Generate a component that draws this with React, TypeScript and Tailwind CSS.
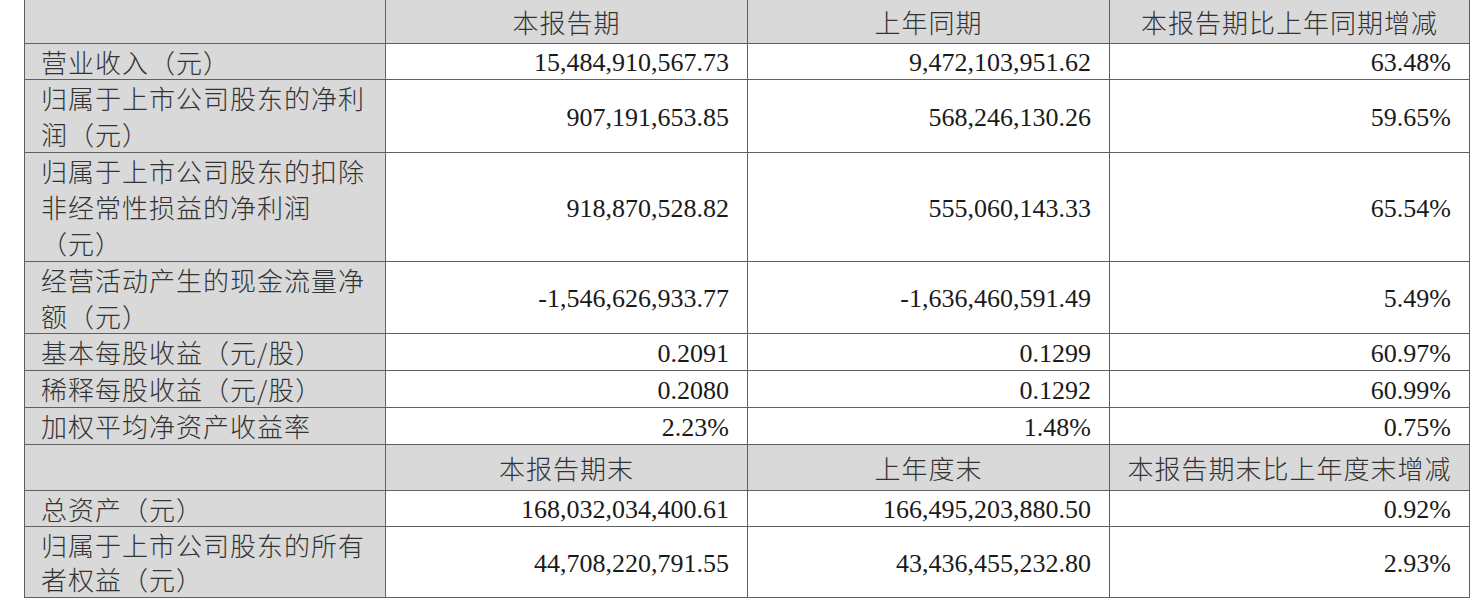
import React from "react";

type Row = {
  label: React.ReactNode;
  a: string;
  b: string;
  c: string;
  h: string;
  lh?: string;
};

const cn = "[font-family:'Noto_Sans_CJK_SC',sans-serif]";

const rows1: Row[] = [
  { label: <>营业收入（元）</>, a: "15,484,910,567.73", b: "9,472,103,951.62", c: "63.48%", h: "h-[36px]" },
  { label: <>归属于上市公司股东的净利<br />润（元）</>, a: "907,191,653.85", b: "568,246,130.26", c: "59.65%", h: "h-[73px]" },
  { label: <>归属于上市公司股东的扣除<br />非经常性损益的净利润<br />（元）</>, a: "918,870,528.82", b: "555,060,143.33", c: "65.54%", h: "h-[109px]" },
  { label: <>经营活动产生的现金流量净<br />额（元）</>, a: "-1,546,626,933.77", b: "-1,636,460,591.49", c: "5.49%", h: "h-[72px]" },
  { label: <>基本每股收益（元/股）</>, a: "0.2091", b: "0.1299", c: "60.97%", h: "h-[37px]" },
  { label: <>稀释每股收益（元/股）</>, a: "0.2080", b: "0.1292", c: "60.99%", h: "h-[37px]" },
  { label: <>加权平均净资产收益率</>, a: "2.23%", b: "1.48%", c: "0.75%", h: "h-[37px]" },
];

const rows2: Row[] = [
  { label: <>总资产（元）</>, a: "168,032,034,400.61", b: "166,495,203,880.50", c: "0.92%", h: "h-[36px]" },
  { label: <>归属于上市公司股东的所有<br />者权益（元）</>, a: "44,708,220,791.55", b: "43,436,455,232.80", c: "2.93%", h: "h-[71px]", lh: "leading-[34px]" },
];

const line = "border-[#5f5f5f]";

function Header({ t, h }: { t: string[]; h: string }) {
  return (
    <div className={`grid grid-cols-[361px_362px_362px_1fr] grid-rows-[minmax(0,1fr)] border-b ${line} bg-[#d9d9d9] ${h}`}>
      <div className={`border-r ${line}`} />
      {t.map((x, i) => (
        <div
          key={i}
          className={`flex items-center justify-center overflow-hidden text-[26px] font-light leading-[36px] tracking-[1px] text-[#333] ${cn} ${
            i < 2 ? `border-r ${line}` : ""
          }`}
        >
          {x}
        </div>
      ))}
    </div>
  );
}

function DataRow({ r }: { r: Row }) {
  const num =
    "flex items-center justify-end overflow-hidden pr-[18px] pt-[3px] text-[26px] leading-[32px] text-[#1a1a1a] [font-family:'Liberation_Serif',serif]";
  return (
    <div className={`grid grid-cols-[361px_362px_362px_1fr] grid-rows-[minmax(0,1fr)] border-b ${line} ${r.h}`}>
      <div
        className={`flex items-center overflow-hidden border-r ${line} bg-[#d9d9d9] pl-[16px] text-[26px] font-light tracking-[1px] text-[#333] ${cn} ${
          r.lh ?? "leading-[36px]"
        }`}
      >
        <div>{r.label}</div>
      </div>
      <div className={`${num} border-r ${line}`}>{r.a}</div>
      <div className={`${num} border-r ${line}`}>{r.b}</div>
      <div className={num}>{r.c}</div>
    </div>
  );
}

export default function App() {
  return (
    <div className="h-[608px] w-[1480px] overflow-hidden bg-white">
      <div className={`ml-[24px] w-[1446px] border-l border-r ${line}`}>
        <Header t={["本报告期", "上年同期", "本报告期比上年同期增减"]} h="h-[44px]" />
        {rows1.map((r, i) => (
          <DataRow key={i} r={r} />
        ))}
        <Header t={["本报告期末", "上年度末", "本报告期末比上年度末增减"]} h="h-[46px]" />
        {rows2.map((r, i) => (
          <DataRow key={i} r={r} />
        ))}
      </div>
    </div>
  );
}
